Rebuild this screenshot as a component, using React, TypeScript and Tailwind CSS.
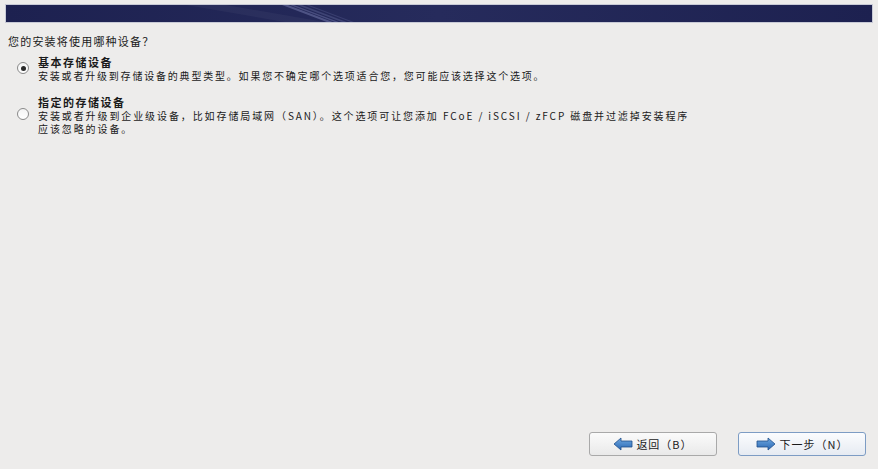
import React from 'react';

const font = { fontFamily: '"Noto Sans CJK SC", "DejaVu Sans", sans-serif' };

// Blue arrow used on the wizard buttons
const Arrow = ({ dir }: { dir: 'left' | 'right' }) => (
  <svg width="20" height="14" viewBox="0 0 20 14" className={dir === 'left' ? '' : 'scale-x-[-1]'}>
    <defs>
      <linearGradient id={`ag-${dir}`} x1="0" y1="0" x2="0" y2="1">
        <stop offset="0" stopColor="#6fa8e0" />
        <stop offset="1" stopColor="#2a68b4" />
      </linearGradient>
    </defs>
    <path d="M1 7 L8 1 L8 4 L19 4 L19 10 L8 10 L8 13 Z" fill={`url(#ag-${dir})`} stroke="#1f4f8c" strokeWidth="0.8" strokeLinejoin="round" />
  </svg>
);

const Radio = ({ checked }: { checked?: boolean }) => (
  <div className="w-[12px] h-[12px] rounded-full border border-[#8a8a8a] bg-gradient-to-b from-[#f4f4f4] to-[#ffffff] flex items-center justify-center shrink-0">
    {checked && <div className="w-[5px] h-[5px] rounded-full bg-[#2a2a2a]" />}
  </div>
);

export default function App() {
  return (
    <div className="w-[878px] h-[469px] bg-[#edeceb] flex flex-col text-[#1a1a1a]" style={font}>
      {/* Header banner */}
      <div className="mt-[4px] mx-[5px] h-[19px] border border-[#c8cad6] relative overflow-hidden bg-gradient-to-r from-[#1d2150] via-[#262b5c] to-[#1d2150]">
        <svg className="absolute inset-0" width="862" height="19" viewBox="0 0 862 19" preserveAspectRatio="none">
          <polygon points="180,0 220,0 330,19 290,19" fill="#ffffff" opacity="0.04" />
          <polygon points="276,0 282,0 332,19 326,19" fill="#9da2d8" opacity="0.35" />
          <polygon points="284,0 288,0 338,19 334,19" fill="#9da2d8" opacity="0.3" />
          <polygon points="291,0 296,0 346,19 341,19" fill="#8d92c8" opacity="0.25" />
          <polygon points="300,0 303,0 353,19 350,19" fill="#8d92c8" opacity="0.2" />
        </svg>
      </div>

      <div className="pl-[8px] pt-[11px] text-[11px] tracking-[1.2px] leading-[14px]">您的安装将使用哪种设备？</div>

      <div className="mt-[8px] flex flex-col gap-[14px]">
        <div className="flex">
          <div className="w-[38px] pl-[17px] pt-[6px] shrink-0">
            <Radio checked />
          </div>
          <div>
            <div className="text-[11px] font-bold tracking-[1.5px] leading-[13px]">基本存储设备</div>
            <div className="text-[10px] tracking-[1.8px] leading-[13px]">安装或者升级到存储设备的典型类型。如果您不确定哪个选项适合您，您可能应该选择这个选项。</div>
          </div>
        </div>
        <div className="flex">
          <div className="w-[38px] pl-[17px] pt-[12px] shrink-0">
            <Radio />
          </div>
          <div>
            <div className="text-[11px] font-bold tracking-[1.5px] leading-[13px]">指定的存储设备</div>
            <div className="text-[10px] tracking-[1.9px] leading-[13px]">安装或者升级到企业级设备，比如存储局域网（SAN）。这个选项可让您添加 FCoE / iSCSI / zFCP 磁盘并过滤掉安装程序</div>
            <div className="text-[10px] tracking-[1.9px] leading-[13px]">应该忽略的设备。</div>
          </div>
        </div>
      </div>

      <div className="flex-1" />

      {/* Wizard buttons */}
      <div className="flex justify-end gap-[21px] pr-[12px] pb-[13px]">
        <button className="w-[128px] h-[24px] rounded-[3px] border border-[#a9a9a9] bg-gradient-to-b from-[#fbfbfb] to-[#e9e9e9] flex items-center justify-center gap-[3px] text-[11px] tracking-[1px]">
          <Arrow dir="left" />
          <span>返回（B）</span>
        </button>
        <button className="w-[128px] h-[24px] rounded-[3px] border border-[#7d9cc4] bg-gradient-to-b from-[#fbfcfe] to-[#e6ebf2] flex items-center justify-center gap-[4px] text-[11px] tracking-[1px]">
          <Arrow dir="right" />
          <span>下一步（N）</span>
        </button>
      </div>
    </div>
  );
}
